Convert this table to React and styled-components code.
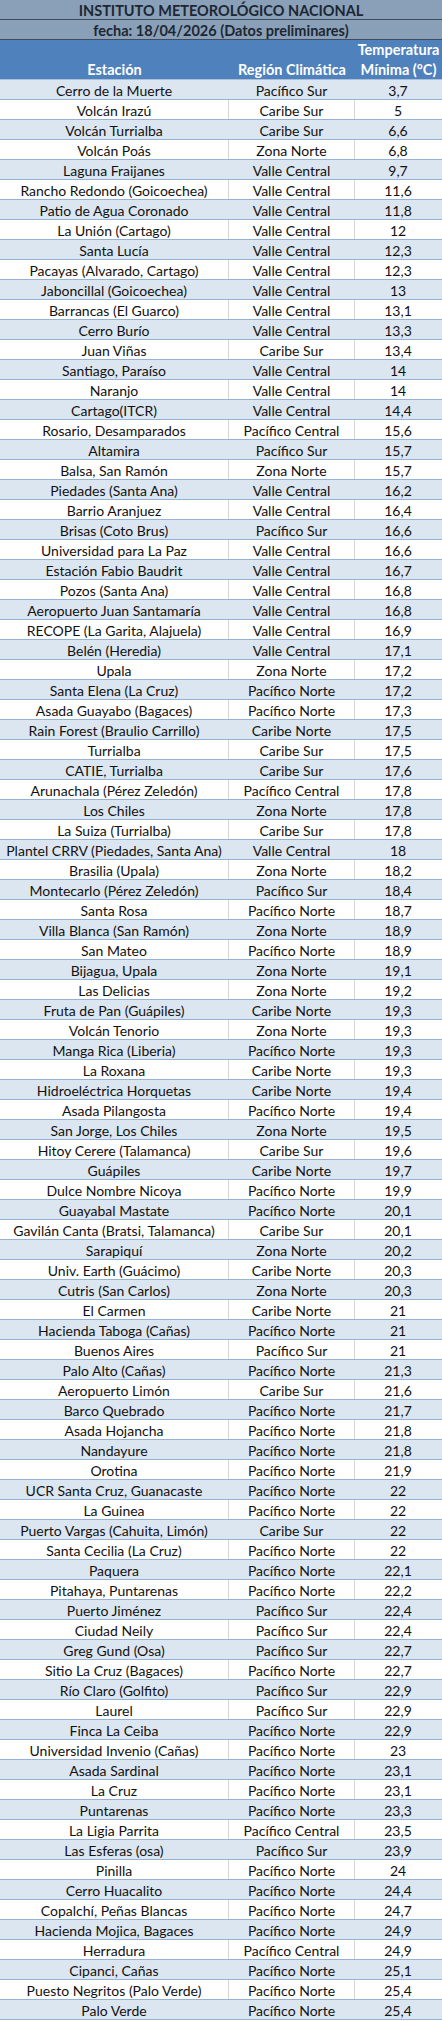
import React from "react";
import styled, { createGlobalStyle } from "styled-components";

const GlobalStyle = createGlobalStyle`
  html, body { margin: 0; padding: 0; background: #ffffff; }
  body { font-family: Lato, "Open Sans", "Liberation Sans", sans-serif; }
`;

const COLS = "229px 126px 87px";

const Sheet = styled.div`
  width: 442px;
  display: flex;
  flex-direction: column;
  font-family: Lato, "Open Sans", "Liberation Sans", sans-serif;
  font-size: 14px;
  color: #111111;
`;

const BannerRow = styled.div`
  height: 20px;
  box-sizing: border-box;
  background: #8aa0b8;
  border-bottom: 1px solid #3e4c5c;
  display: flex;
  align-items: flex-end;
  justify-content: center;
  padding-top: 3px;
  line-height: 16px;
  font-size: 14.5px;
  font-weight: 700;
  color: #1c2733;
`;

const HeaderRow = styled.div`
  display: grid;
  grid-template-columns: ${COLS};
  height: 40px;
  box-sizing: border-box;
  background: #4f81bd;
  border-bottom: 1px solid #a9c0dc;
  color: #ffffff;
  font-size: 14.5px;
  font-weight: 700;
`;

const HeaderCell = styled.div`
  display: flex;
  flex-direction: column;
  justify-content: flex-end;
  align-items: center;
  text-align: center;
  line-height: 20px;
  white-space: nowrap;
`;

const Row = styled.div`
  display: grid;
  grid-template-columns: ${COLS};
  height: 20px;
  box-sizing: border-box;
  border-bottom: 1px solid #95b3d7;
  background: ${(p) => (p.$striped ? "#dce6f1" : "#ffffff")};
`;

const Cell = styled.div`
  display: flex;
  justify-content: center;
  padding-top: 3px;
  line-height: 16px;
  white-space: nowrap;
  overflow: hidden;
  border-right: 1px solid ${(p) => (p.$last ? "transparent" : p.$striped ? "#dce6f1" : "#d4d4d4")};
`;

const rows = [
  ["Cerro de la Muerte", "Pacífico Sur", "3,7"],
  ["Volcán Irazú", "Caribe Sur", "5"],
  ["Volcán Turrialba", "Caribe Sur", "6,6"],
  ["Volcán Poás", "Zona Norte", "6,8"],
  ["Laguna Fraijanes", "Valle Central", "9,7"],
  ["Rancho Redondo (Goicoechea)", "Valle Central", "11,6"],
  ["Patio de Agua Coronado", "Valle Central", "11,8"],
  ["La Unión (Cartago)", "Valle Central", "12"],
  ["Santa Lucía", "Valle Central", "12,3"],
  ["Pacayas (Alvarado, Cartago)", "Valle Central", "12,3"],
  ["Jaboncillal (Goicoechea)", "Valle Central", "13"],
  ["Barrancas (El Guarco)", "Valle Central", "13,1"],
  ["Cerro Burío", "Valle Central", "13,3"],
  ["Juan Viñas", "Caribe Sur", "13,4"],
  ["Santiago, Paraíso", "Valle Central", "14"],
  ["Naranjo", "Valle Central", "14"],
  ["Cartago(ITCR)", "Valle Central", "14,4"],
  ["Rosario, Desamparados", "Pacífico Central", "15,6"],
  ["Altamira", "Pacífico Sur", "15,7"],
  ["Balsa, San Ramón", "Zona Norte", "15,7"],
  ["Piedades (Santa Ana)", "Valle Central", "16,2"],
  ["Barrio Aranjuez", "Valle Central", "16,4"],
  ["Brisas (Coto Brus)", "Pacífico Sur", "16,6"],
  ["Universidad para La Paz", "Valle Central", "16,6"],
  ["Estación Fabio Baudrit", "Valle Central", "16,7"],
  ["Pozos (Santa Ana)", "Valle Central", "16,8"],
  ["Aeropuerto Juan Santamaría", "Valle Central", "16,8"],
  ["RECOPE (La Garita, Alajuela)", "Valle Central", "16,9"],
  ["Belén (Heredia)", "Valle Central", "17,1"],
  ["Upala", "Zona Norte", "17,2"],
  ["Santa Elena (La Cruz)", "Pacífico Norte", "17,2"],
  ["Asada Guayabo (Bagaces)", "Pacífico Norte", "17,3"],
  ["Rain Forest (Braulio Carrillo)", "Caribe Norte", "17,5"],
  ["Turrialba", "Caribe Sur", "17,5"],
  ["CATIE, Turrialba", "Caribe Sur", "17,6"],
  ["Arunachala (Pérez Zeledón)", "Pacífico Central", "17,8"],
  ["Los Chiles", "Zona Norte", "17,8"],
  ["La Suiza (Turrialba)", "Caribe Sur", "17,8"],
  ["Plantel CRRV (Piedades, Santa Ana)", "Valle Central", "18"],
  ["Brasilia (Upala)", "Zona Norte", "18,2"],
  ["Montecarlo (Pérez Zeledón)", "Pacífico Sur", "18,4"],
  ["Santa Rosa", "Pacífico Norte", "18,7"],
  ["Villa Blanca (San Ramón)", "Zona Norte", "18,9"],
  ["San Mateo", "Pacífico Norte", "18,9"],
  ["Bijagua, Upala", "Zona Norte", "19,1"],
  ["Las Delicias", "Zona Norte", "19,2"],
  ["Fruta de Pan (Guápiles)", "Caribe Norte", "19,3"],
  ["Volcán Tenorio", "Zona Norte", "19,3"],
  ["Manga Rica (Liberia)", "Pacífico Norte", "19,3"],
  ["La Roxana", "Caribe Norte", "19,3"],
  ["Hidroeléctrica Horquetas", "Caribe Norte", "19,4"],
  ["Asada Pilangosta", "Pacífico Norte", "19,4"],
  ["San Jorge, Los Chiles", "Zona Norte", "19,5"],
  ["Hitoy Cerere (Talamanca)", "Caribe Sur", "19,6"],
  ["Guápiles", "Caribe Norte", "19,7"],
  ["Dulce Nombre Nicoya", "Pacífico Norte", "19,9"],
  ["Guayabal Mastate", "Pacífico Norte", "20,1"],
  ["Gavilán Canta (Bratsi, Talamanca)", "Caribe Sur", "20,1"],
  ["Sarapiquí", "Zona Norte", "20,2"],
  ["Univ. Earth (Guácimo)", "Caribe Norte", "20,3"],
  ["Cutris (San Carlos)", "Zona Norte", "20,3"],
  ["El Carmen", "Caribe Norte", "21"],
  ["Hacienda Taboga (Cañas)", "Pacífico Norte", "21"],
  ["Buenos Aires", "Pacífico Sur", "21"],
  ["Palo Alto (Cañas)", "Pacífico Norte", "21,3"],
  ["Aeropuerto Limón", "Caribe Sur", "21,6"],
  ["Barco Quebrado", "Pacífico Norte", "21,7"],
  ["Asada Hojancha", "Pacífico Norte", "21,8"],
  ["Nandayure", "Pacífico Norte", "21,8"],
  ["Orotina", "Pacífico Norte", "21,9"],
  ["UCR Santa Cruz, Guanacaste", "Pacífico Norte", "22"],
  ["La Guinea", "Pacífico Norte", "22"],
  ["Puerto Vargas (Cahuita, Limón)", "Caribe Sur", "22"],
  ["Santa Cecilia (La Cruz)", "Pacífico Norte", "22"],
  ["Paquera", "Pacífico Norte", "22,1"],
  ["Pitahaya, Puntarenas", "Pacífico Norte", "22,2"],
  ["Puerto Jiménez", "Pacífico Sur", "22,4"],
  ["Ciudad Neily", "Pacífico Sur", "22,4"],
  ["Greg Gund (Osa)", "Pacífico Sur", "22,7"],
  ["Sitio La Cruz (Bagaces)", "Pacífico Norte", "22,7"],
  ["Río Claro (Golfito)", "Pacífico Sur", "22,9"],
  ["Laurel", "Pacífico Sur", "22,9"],
  ["Finca La Ceiba", "Pacífico Norte", "22,9"],
  ["Universidad Invenio (Cañas)", "Pacífico Norte", "23"],
  ["Asada Sardinal", "Pacífico Norte", "23,1"],
  ["La Cruz", "Pacífico Norte", "23,1"],
  ["Puntarenas", "Pacífico Norte", "23,3"],
  ["La Ligia Parrita", "Pacífico Central", "23,5"],
  ["Las Esferas (osa)", "Pacífico Sur", "23,9"],
  ["Pinilla", "Pacífico Norte", "24"],
  ["Cerro Huacalito", "Pacífico Norte", "24,4"],
  ["Copalchí, Peñas Blancas", "Pacífico Norte", "24,7"],
  ["Hacienda Mojica, Bagaces", "Pacífico Norte", "24,9"],
  ["Herradura", "Pacífico Central", "24,9"],
  ["Cipanci, Cañas", "Pacífico Norte", "25,1"],
  ["Puesto Negritos (Palo Verde)", "Pacífico Norte", "25,4"],
  ["Palo Verde", "Pacífico Norte", "25,4"],
];

export default function App() {
  return (
    <>
      <GlobalStyle />
      <Sheet>
        <BannerRow>INSTITUTO METEOROLÓGICO NACIONAL</BannerRow>
        <BannerRow>fecha: 18/04/2026 (Datos preliminares)</BannerRow>
        <HeaderRow>
          <HeaderCell>Estación</HeaderCell>
          <HeaderCell>Región Climática</HeaderCell>
          <HeaderCell>
            <span>Temperatura</span>
            <span>Mínima (°C)</span>
          </HeaderCell>
        </HeaderRow>
        {rows.map(([station, region, temp], i) => {
          const striped = i % 2 === 0;
          return (
            <Row key={i} $striped={striped}>
              <Cell $striped={striped}>{station}</Cell>
              <Cell $striped={striped}>{region}</Cell>
              <Cell $striped={striped} $last>{temp}</Cell>
            </Row>
          );
        })}
      </Sheet>
    </>
  );
}
